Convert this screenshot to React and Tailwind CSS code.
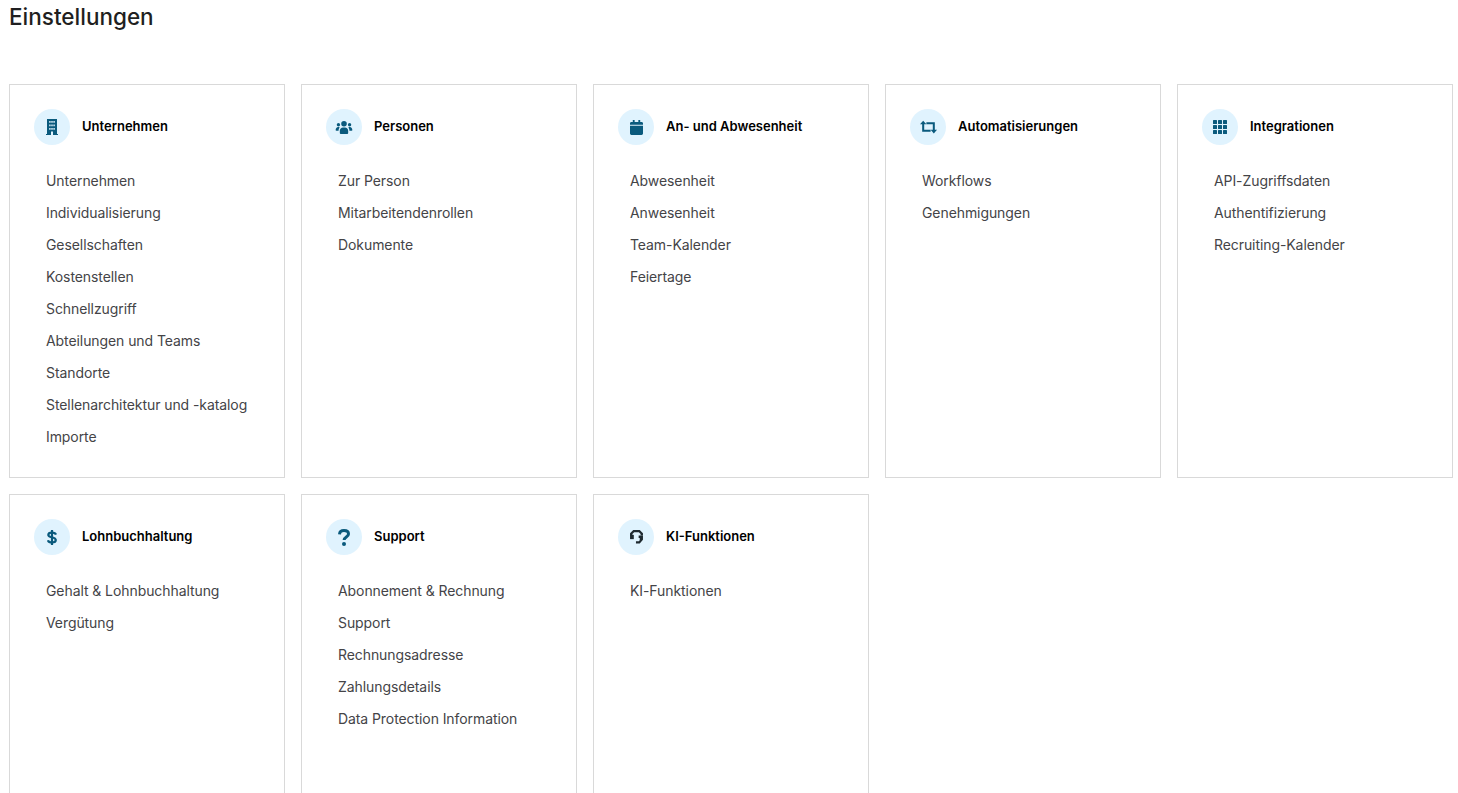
const iconColor = '#0a5a7d';

function BuildingIcon() {
  return (
    <svg width="12" height="16" viewBox="0 0 12 16" fill={iconColor}>
      <path fillRule="evenodd" d="M1 0h10v15h1v1H0v-1h1V0zm2.200 2v1.800h1.400V2H3.200zm2.100 0v1.800h1.400V2H5.300zm2.100 0v1.800h1.400V2H7.400zM3.200 5.500v1.800h1.400V5.500H3.200zm2.100 0v1.800h1.400V5.500H5.300zm2.100 0v1.800h1.400V5.500H7.400zM3.200 9v1.800h1.400V9H3.200zm2.100 0v1.800h1.400V9H5.300zm2.100 0v1.800h1.400V9H7.400zM5 12.500V16h2v-3.500H5z" />
    </svg>
  );
}

function PeopleIcon() {
  return (
    <svg width="18" height="13" viewBox="0 0 18 14" fill={iconColor}>
      <circle cx="9" cy="3" r="3" />
      <circle cx="3" cy="4" r="1.800" />
      <circle cx="15" cy="4" r="1.800" />
      <path d="M4.500 13v-2.500C4.500 8.500 6 7 8 7h2c2 0 3.500 1.500 3.500 3.500V13c0 .6-.4 1-1 1h-7c-.6 0-1-.4-1-1z" />
      <path d="M0 10c0-2 1-3.500 2.800-3.500.6 0 1.100.1 1.500.4C3.500 7.800 3.200 9 3.200 10.500H.8C.3 10.500 0 10.400 0 10z" />
      <path d="M18 10c0-2-1-3.500-2.800-3.500-.6 0-1.100.1-1.500.4.800.9 1.100 2.100 1.100 3.600h2.400c.5 0 .8-.1.8-.5z" />
    </svg>
  );
}

function CalendarIcon() {
  return (
    <svg width="13" height="15" viewBox="0 0 14 16" fill={iconColor}>
      <path d="M3 0h2v2h4V0h2v2h1.500C13.300 2 14 2.700 14 3.500V5H0V3.500C0 2.700.7 2 1.500 2H3V0z" />
      <path d="M0 6h14v8.500c0 .8-.7 1.500-1.500 1.500h-11C.7 16 0 15.300 0 14.500V6z" />
    </svg>
  );
}

function RepeatIcon() {
  return (
    <svg width="17" height="14" viewBox="0 0 16 13" fill="none" stroke={iconColor} strokeWidth="1.900">
      <path d="M3 3v7.100h7" />
      <path d="M6 2.900h7V10" />
      <path d="M0 4 3 .5 6 4z" fill={iconColor} stroke="none" />
      <path d="M10 9 13 12.500 16 9z" fill={iconColor} stroke="none" />
    </svg>
  );
}

function GridIcon() {
  return (
    <svg width="14" height="14" viewBox="0 0 14 14" fill={iconColor}>
      <rect x="0" y="0" width="4" height="4" rx="0.500" />
      <rect x="5" y="0" width="4" height="4" rx="0.500" />
      <rect x="10" y="0" width="4" height="4" rx="0.500" />
      <rect x="0" y="5" width="4" height="4" rx="0.500" />
      <rect x="5" y="5" width="4" height="4" rx="0.500" />
      <rect x="10" y="5" width="4" height="4" rx="0.500" />
      <rect x="0" y="10" width="4" height="4" rx="0.500" />
      <rect x="5" y="10" width="4" height="4" rx="0.500" />
      <rect x="10" y="10" width="4" height="4" rx="0.500" />
    </svg>
  );
}

function DollarIcon() {
  return (
    <svg width="10" height="15" viewBox="0 0 10 15" fill="none" stroke={iconColor} strokeWidth="2.200">
      <path d="M9 4.700C8.500 3.200 7.200 2.600 5 2.600 2.800 2.600 1.300 3.400 1.300 4.900c0 3.100 7.500 1.600 7.500 5.200 0 1.500-1.600 2.400-3.800 2.400-2.300 0-3.700-.8-4.100-2.300" />
      <path d="M5 0v15" />
    </svg>
  );
}

function QuestionIcon() {
  return (
    <svg width="12" height="17" viewBox="0 0 12 17" fill="none" stroke={iconColor} strokeWidth="3">
      <path d="M1.500 5.300C1.700 2.900 3.400 1.600 6 1.600c2.700 0 4.500 1.300 4.500 3.300 0 3.200-4.400 2.900-4.400 6.200" />
      <circle cx="6" cy="15" r="2" fill={iconColor} stroke="none" />
    </svg>
  );
}

function AiIcon() {
  return (
    <svg width="13" height="14" viewBox="0 0 12 13" fill="#1f2a30">
      <path d="M3 0h6l3 3v2H9.800V3.800L8.200 2.200H3.800L2.200 3.800V5H0V3l3-3z" />
      <path d="M0 4.500h3.500V8.500H0z" />
      <path d="M8 5h4v4l-3 3.500H5.500v-2h2.700l.8-.9V7.500H8V5z" />
    </svg>
  );
}

const sections = [
  {
    title: 'Unternehmen',
    icon: <BuildingIcon />,
    items: [
      'Unternehmen',
      'Individualisierung',
      'Gesellschaften',
      'Kostenstellen',
      'Schnellzugriff',
      'Abteilungen und Teams',
      'Standorte',
      'Stellenarchitektur und -katalog',
      'Importe',
    ],
  },
  {
    title: 'Personen',
    icon: <PeopleIcon />,
    items: ['Zur Person', 'Mitarbeitendenrollen', 'Dokumente'],
  },
  {
    title: 'An- und Abwesenheit',
    icon: <CalendarIcon />,
    items: ['Abwesenheit', 'Anwesenheit', 'Team-Kalender', 'Feiertage'],
  },
  {
    title: 'Automatisierungen',
    icon: <RepeatIcon />,
    items: ['Workflows', 'Genehmigungen'],
  },
  {
    title: 'Integrationen',
    icon: <GridIcon />,
    items: ['API-Zugriffsdaten', 'Authentifizierung', 'Recruiting-Kalender'],
  },
  {
    title: 'Lohnbuchhaltung',
    icon: <DollarIcon />,
    items: ['Gehalt & Lohnbuchhaltung', 'Vergütung'],
  },
  {
    title: 'Support',
    icon: <QuestionIcon />,
    items: [
      'Abonnement & Rechnung',
      'Support',
      'Rechnungsadresse',
      'Zahlungsdetails',
      'Data Protection Information',
    ],
  },
  {
    title: 'KI-Funktionen',
    icon: <AiIcon />,
    items: ['KI-Funktionen'],
  },
];

function Card({ section }) {
  return (
    <div className="border border-[#d9d9d9] bg-white p-6 h-[394px]">
      <div className="flex items-center gap-3">
        <div className="w-9 h-9 rounded-full bg-[#e0f3fe] flex items-center justify-center shrink-0">
          {section.icon}
        </div>
        <h2 className="text-[13px] font-semibold text-black">{section.title}</h2>
      </div>
      <ul className="mt-5">
        {section.items.map((item) => (
          <li key={item} className="h-8 px-3 flex items-center text-sm tracking-[-0.08px] text-[#444447] whitespace-nowrap">
            {item}
          </li>
        ))}
      </ul>
    </div>
  );
}

export default function App() {
  return (
    <div className="h-screen overflow-hidden bg-white pl-[9px] pr-[5px] font-['Inter',sans-serif]">
      <h1 className="h-[84px] pt-[3px] text-[22.5px] leading-7 font-medium text-[#1f1f21]">Einstellungen</h1>
      <div className="grid grid-cols-5 gap-4">
        {sections.map((section) => (
          <Card key={section.title} section={section} />
        ))}
      </div>
    </div>
  );
}
